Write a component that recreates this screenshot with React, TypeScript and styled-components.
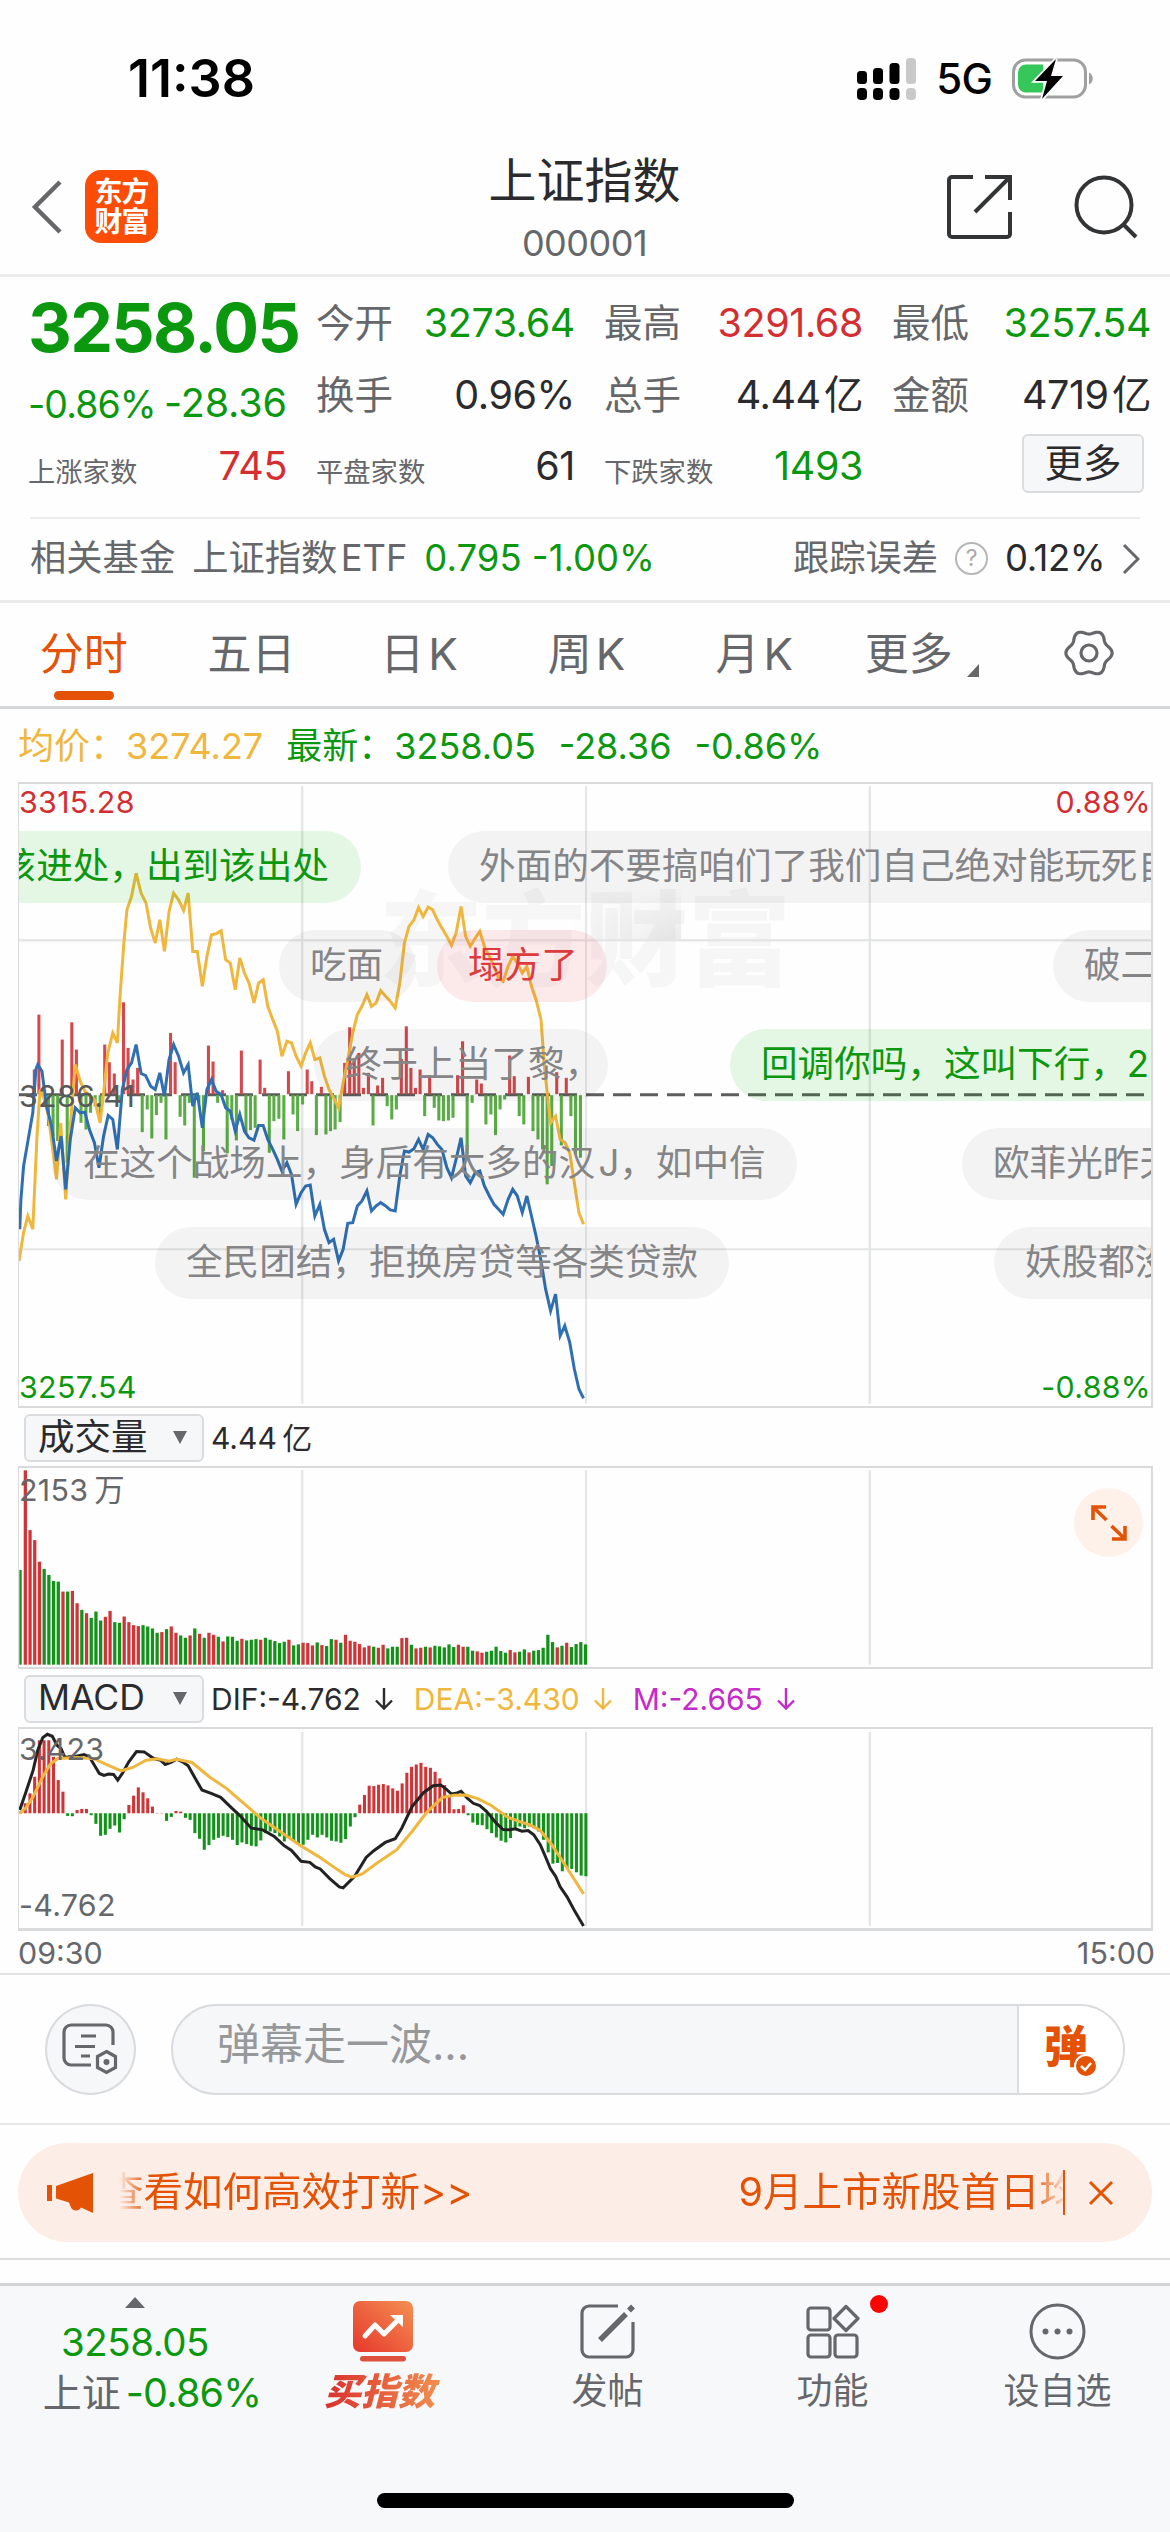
import React from "react";
import styled, { createGlobalStyle, css } from "styled-components";

const C = {
  green: "#0b980f",
  red: "#d32f33",
  ink: "#2b2b2d",
  grey: "#66676a",
  light: "#97989a",
  orange: "#e35205",
  yellow: "#efb73e",
  line: "#d9dadb",
  blue: "#2f6fb2",
  panel: "#f6f7f9",
};

const Global = createGlobalStyle`
  * { box-sizing: border-box; }
  html, body { margin: 0; padding: 0; background: #fefefe; }
  body {
    font-family: Inter, "Noto Sans CJK SC", sans-serif;
    color: ${C.ink};
    overflow: hidden;
  }
  svg { display: block; flex: none; }
`;

const Screen = styled.main`
  width: 1170px;
  height: 2532px;
  display: flex;
  flex-direction: column;
  overflow: hidden;
  background: #fefefe;
`;

const Txt = styled.span<{ $s: number; $c?: string; $ls?: number; $w?: number; $m?: string }>`
  font-size: ${(p) => p.$s}px;
  line-height: 1.2;
  color: ${(p) => p.$c || C.ink};
  letter-spacing: ${(p) => p.$ls || 0}px;
  font-weight: ${(p) => p.$w || 400};
  margin: ${(p) => p.$m || 0};
  white-space: nowrap;
  flex: none;
`;

/* ---------- status bar ---------- */
const StatusBar = styled.div`
  height: 156px;
  padding: 2px 76px 0 128px;
  display: flex;
  align-items: center;
  justify-content: space-between;
`;
const StatusIcons = styled.div`
  display: flex;
  align-items: center;
  gap: 20px;
`;

/* ---------- header ---------- */
const Header = styled.header`
  height: 121px;
  border-bottom: 3px solid #ececed;
  display: grid;
  grid-template-columns: 1fr auto 1fr;
  padding: 0 32px 0 31px;
`;
const HeaderSide = styled.div<{ $end?: boolean }>`
  display: flex;
  align-items: center;
  padding-bottom: 18px;
  padding-top: 1px;
  gap: ${(p) => (p.$end ? 62 : 22)}px;
  justify-content: ${(p) => (p.$end ? "flex-end" : "flex-start")};
`;
const TitleBlock = styled.div`
  display: flex;
  flex-direction: column;
  align-items: center;
  gap: 12px;
  margin-top: -4px;
`;
const BrandLogo = styled.div`
  width: 73px;
  height: 73px;
  border-radius: 16px;
  background: #fb4d07;
  color: #fff;
  font-weight: 700;
  font-size: 28px;
  line-height: 30px;
  letter-spacing: -1px;
  display: flex;
  flex-direction: column;
  align-items: center;
  justify-content: center;
`;

/* ---------- quote ---------- */
const Quote = styled.section`
  height: 240px;
  margin: 0 19px 0 28px;
  padding-top: 10px;
  display: grid;
  grid-template-columns: 259px 259px 259px 259px;
  column-gap: 29px;
`;
const Column = styled.div`
  display: flex;
  flex-direction: column;
`;
const Row = styled.div<{ $h: number; $pt?: number }>`
  height: ${(p) => p.$h}px;
  padding-top: ${(p) => p.$pt || 0}px;
  display: flex;
  align-items: center;
  justify-content: space-between;
`;
const MoreButton = styled.button`
  width: 122px;
  height: 59px;
  margin: 0 7px 0 auto;
  padding: 0;
  border: 2px solid #dadcdf;
  border-radius: 6px;
  background: #f6f7f9;
  font-family: inherit;
  display: grid;
  place-items: center;
`;
const FundRow = styled.section`
  height: 86px;
  border-bottom: 3px solid #ececed;
  padding: 0 30px;
  display: flex;
  align-items: center;
  gap: 17px;
  box-shadow: inset 30px 0 #fefefe, inset -30px 0 #fefefe, inset 0 2px #ececed;
`;
const Spacer = styled.div`
  flex: 1;
`;
const Help = styled.span`
  width: 33px;
  height: 33px;
  border: 2px solid #b5b6b8;
  border-radius: 50%;
  color: #aaa;
  font-size: 23px;
  line-height: 29px;
  text-align: center;
`;

/* ---------- tabs ---------- */
const Tabs = styled.nav`
  height: 106px;
  border-bottom: 3px solid #d6d7d8;
  display: grid;
  grid-template-columns: repeat(7, 167.6px);
`;
const Tab = styled.div<{ $on?: boolean }>`
  height: 104px;
  padding-top: 25px;
  display: flex;
  align-items: flex-start;
  justify-content: center;
  position: relative;
  font-size: 44px;
  line-height: 53px;
  white-space: nowrap;
  color: ${(p) => (p.$on ? C.orange : C.grey)};
  ${(p) =>
    p.$on &&
    css`
      &::after {
        content: "";
        position: absolute;
        left: 54px;
        bottom: 7px;
        width: 60px;
        height: 9px;
        border-radius: 5px;
        background: ${C.orange};
      }
    `}
`;
const Corner = styled.i`
  align-self: flex-start;
  margin: 36px 0 0 14px;
  border-left: 12px solid transparent;
  border-bottom: 13px solid ${C.grey};
`;
const Legend = styled.div`
  height: 73px;
  padding: 2px 0 0 18px;
  display: flex;
  align-items: center;
  gap: 23px;
`;

/* ---------- plots ---------- */
const Plot = styled.div<{ $h: number; $b?: number }>`
  position: relative;
  overflow: hidden;
  height: ${(p) => p.$h}px;
  margin: 0 17px 0 18px;
  border: 2px solid ${C.line};
  border-bottom-width: ${(p) => p.$b || 2}px;
  border-left-width: 1px;
  flex: none;
`;
const Canvas = styled.svg`
  position: relative;
  width: 1134px;
  height: 100%;
`;
const Overlay = styled.span<{ $x?: number; $r?: number; $y: number; $c: string }>`
  position: absolute;
  top: ${(p) => p.$y}px;
  ${(p) => (p.$r !== undefined ? `right: ${p.$r}px` : `left: ${p.$x || 0}px`)};
  color: ${(p) => p.$c};
  font-size: 30.4px;
  line-height: 36px;
  letter-spacing: 0.3px;
  white-space: nowrap;
`;
const Watermark = styled.div`
  position: absolute;
  left: 360px;
  top: 92px;
  font-size: 103px;
  line-height: 130px;
  font-weight: 900;
  color: #f6f6f7;
  white-space: nowrap;
`;
const Smudge = styled.div`
  position: absolute;
  left: 552px;
  top: 104px;
  width: 110px;
  height: 52px;
  background: linear-gradient(90deg, rgba(0, 0, 0, 0), rgba(0, 0, 0, 0.08));
  mask-image: linear-gradient(transparent, #000);
`;
const tones = {
  grey: ["rgba(0,0,0,.045)", "#858587"],
  green: ["rgba(0,180,0,.1)", "#0c970f"],
  red: ["rgba(235,30,45,.09)", "#dd3a3e"],
};
const Bullet = styled.div<{ $x: number; $y: number; $w?: number; $tone: keyof typeof tones }>`
  position: absolute;
  left: ${(p) => p.$x}px;
  top: ${(p) => p.$y}px;
  width: ${(p) => (p.$w ? p.$w + "px" : "auto")};
  height: 72px;
  padding: 0 31px;
  border-radius: 36px;
  background: ${(p) => tones[p.$tone][0]};
  color: ${(p) => tones[p.$tone][1]};
  font-size: 36.6px;
  line-height: 71px;
  white-space: nowrap;
`;
const PlotBar = styled.div<{ $h: number }>`
  height: ${(p) => p.$h}px;
  padding: 1px 0 0 24px;
  display: flex;
  align-items: center;
`;
const Picker = styled.div`
  width: 180px;
  height: 48px;
  margin-right: 7px;
  padding: 0 15px 0 12px;
  border: 2px solid #dadcdf;
  border-radius: 6px;
  background: #f6f7f9;
  display: flex;
  align-items: center;
  justify-content: space-between;
`;
const Down = styled.i`
  border: 7px solid transparent;
  border-top: 13px solid ${C.grey};
  border-bottom: 0;
`;
const Up = styled(Down)`
  border: 10px solid transparent;
  border-bottom: 11px solid ${C.grey};
  border-top: 0;
`;
const ArrowBox = styled.span`
  margin: 0 20px 0 13px;
`;
const Expand = styled.div`
  position: absolute;
  right: 8px;
  top: 20px;
  width: 69px;
  height: 69px;
  border-radius: 50%;
  background: #fef1e9;
  display: grid;
  place-items: center;
`;
const TimeAxis = styled.div`
  height: 44px;
  padding: 2px 15px 0 18px;
  border-bottom: 2px solid #e2e3e4;
  display: flex;
  align-items: center;
  justify-content: space-between;
`;

/* ---------- comment box, notice, tab bar ---------- */
const CommentRow = styled.section`
  height: 150px;
  padding: 0 45px;
  border-bottom: 2px solid #e7e8e9;
  display: flex;
  align-items: center;
  gap: 35px;
`;
const RoundButton = styled.div`
  width: 91px;
  height: 91px;
  border: 2px solid #d9dbde;
  border-radius: 50%;
  background: ${C.panel};
  display: grid;
  place-items: center;
`;
const CommentBox = styled.div`
  width: 955px;
  height: 91px;
  border: 2px solid #d9dbde;
  border-radius: 46px;
  overflow: hidden;
  display: flex;
  background: ${C.panel};
`;
const CommentInput = styled.div`
  flex: 1;
  padding: 13px 0 0 44px;
`;
const CommentToggle = styled.div`
  width: 106px;
  border-left: 2px solid #d9dbde;
  background: #fff;
  position: relative;
  padding: 15px 0 0 25px;
`;
const ToggleCheck = styled.svg`
  position: absolute;
  left: 55px;
  top: 48px;
`;
const Notice = styled.section`
  height: 99px;
  margin: 18px 18px 16px;
  padding: 0 36px 0 29px;
  border-radius: 50px;
  background: #fceee6;
  display: flex;
  align-items: center;
`;
const Ticker = styled.div`
  width: 944px;
  flex: none;
  margin-left: 24px;
  overflow: hidden;
  display: flex;
  justify-content: space-between;
  mask-image: linear-gradient(90deg, transparent, #000 28px, #000 912px, rgba(0, 0, 0, 0.15));
`;
const NoticeRule = styled.i`
  width: 2px;
  flex: none;
  height: 45px;
  background: ${C.orange};
  margin-right: 23px;
`;
const Foot = styled.div`
  height: 25px;
  border-top: 2px solid #dcdddf;
`;
const TabBar = styled.footer`
  flex: 1;
  background: #f7f8fa;
  border-top: 3px solid #d3d4d6;
  display: grid;
  grid-template-columns: 270px 225px 225px 225px 225px;
  grid-template-rows: 206px 1fr;
`;
const TabItem = styled.div<{ $pt: number }>`
  padding-top: ${(p) => p.$pt}px;
  display: flex;
  flex-direction: column;
  align-items: center;
  position: relative;
`;
const IndexLine = styled.div`
  display: flex;
  align-items: center;
  gap: 5px;
  margin: 5px 0 0 34px;
`;
const BuyLabel = styled.span`
  margin-top: 6px;
  font-size: 37px;
  line-height: 48px;
  font-weight: 900;
  font-style: italic;
  background: linear-gradient(90deg, #d9302c, #f2904f);
  -webkit-background-clip: text;
  background-clip: text;
  color: transparent;
  padding-right: 6px;
`;
const Dot = styled.i`
  position: absolute;
  left: 150px;
  top: 9px;
  width: 18px;
  height: 18px;
  border-radius: 50%;
  background: #f80505;
`;
const HomeIndicator = styled.div`
  grid-column: 1 / -1;
  justify-self: center;
  width: 417px;
  height: 15px;
  margin-top: 1px;
  border-radius: 8px;
  background: #000;
`;

/* ---------- chart data ---------- */
const avgLine =
  "48,1475 60,1390 71,1340 84,1380 95,1100 103,960 113,985 125,1040 146,1230 157,1060 170,1290 180,1100 195,885 208,935 220,965 245,990 260,1060 270,960 280,850 293,790 305,820 312,680 322,520 330,420 342,380 354,310 367,370 380,400 392,475 404,520 416,450 428,545 440,425 452,370 465,390 478,422 490,370 502,545 514,545 527,650 539,560 551,495 563,492 576,483 588,570 600,580 613,660 625,565 637,610 649,640 662,700 674,640 686,630 698,710 711,750 723,785 735,860 748,815 760,820 772,860 785,890 797,850 809,820 821,870 834,865 846,920 858,960 870,985 883,1015 895,940 907,870 920,790 932,735 944,710 957,675 969,710 981,700 993,663 1006,680 1018,695 1031,715 1043,640 1055,520 1067,470 1080,450 1092,413 1104,440 1117,412 1129,420 1141,450 1153,475 1166,500 1178,527 1190,490 1203,410 1215,500 1227,530 1240,505 1252,485 1264,530 1277,560 1289,590 1301,625 1313,635 1326,590 1338,560 1350,580 1363,610 1375,590 1387,650 1399,690 1412,750 1420,880 1430,990 1437,1060 1450,1040 1462,1110 1475,1120 1487,1150 1499,1240 1511,1330 1523,1365";
const priceLine =
  "50,1380 53,1290 60,1190 72,1110 84,1030 92,900 97,885 108,905 120,1010 133,1070 146,1175 158,1100 170,1260 182,1110 195,1015 208,1030 220,1028 232,1080 245,1120 257,1195 269,1100 281,1038 293,1050 305,1140 318,960 330,900 342,880 354,825 367,912 379,918 392,950 404,960 416,910 428,980 440,870 452,825 465,860 478,910 490,885 502,1010 514,970 527,1075 539,960 551,930 563,965 576,975 588,1015 600,1025 613,1085 625,1035 637,1085 649,1105 662,1112 674,1068 686,1068 698,1110 711,1140 723,1170 735,1205 748,1180 760,1215 772,1305 785,1270 797,1250 809,1247 821,1340 834,1305 846,1380 858,1420 870,1410 883,1475 895,1440 907,1362 920,1360 932,1310 944,1295 957,1265 969,1325 981,1310 993,1300 1006,1310 1018,1322 1031,1325 1043,1220 1055,1145 1067,1148 1080,1138 1092,1110 1104,1140 1117,1095 1129,1105 1141,1125 1153,1140 1166,1195 1178,1225 1190,1170 1203,1105 1215,1220 1227,1240 1240,1210 1252,1205 1264,1250 1277,1280 1289,1305 1301,1320 1313,1335 1326,1290 1338,1260 1350,1280 1363,1330 1375,1280 1387,1340 1399,1400 1412,1475 1424,1560 1437,1625 1450,1575 1462,1700 1474,1670 1487,1720 1499,1800 1511,1860 1523,1888";
const gains: number[][] = [
  [88, 900], [100, 735], [161, 810], [186, 758], [198, 840], [272, 825], [284, 878], [297, 912], [321, 698], [333, 835], [346, 930], [358, 895], [444, 790], [456, 878], [543, 828], [555, 876], [580, 962], [629, 843], [678, 870], [690, 955], [752, 905], [801, 900], [813, 935], [838, 952], [899, 880], [912, 773], [924, 870], [936, 850], [948, 955], [961, 910], [985, 948], [998, 925], [1047, 868], [1060, 770], [1072, 895], [1084, 955], [1096, 900], [1121, 917], [1194, 917], [1207, 815], [1244, 930], [1256, 942], [1330, 858], [1342, 920], [1379, 922], [1453, 908], [1478, 925],
];
const losses: number[][] = [
  [125, 1070], [137, 1100], [149, 1115], [174, 1180], [210, 1060], [223, 1080], [235, 1030], [247, 1010], [260, 1050], [309, 1000], [370, 1088], [383, 1020], [395, 1107], [407, 1037], [419, 1000], [432, 1110], [469, 1042], [481, 1068], [493, 1000], [506, 1225], [518, 1000], [530, 1145], [567, 1000], [592, 1152], [604, 1050], [616, 1113], [641, 1090], [653, 1082], [665, 1075], [702, 1150], [714, 1055], [727, 1048], [740, 1110], [764, 1035], [776, 1085], [789, 1005], [825, 1097], [850, 1095], [862, 1085], [874, 1080], [887, 1058], [973, 1068], [1010, 1010], [1022, 1050], [1034, 1020], [1108, 1040], [1133, 1015], [1145, 1053], [1157, 1055], [1170, 1053], [1182, 1045], [1219, 1155], [1232, 1000], [1268, 1065], [1281, 1035], [1293, 1097], [1305, 1020], [1317, 990], [1355, 1040], [1367, 1065], [1391, 1085], [1404, 1110], [1416, 1140], [1428, 1245], [1440, 1190], [1465, 1128], [1490, 1040], [1502, 1155], [1515, 1165],
];
const volume =
  "g513 r213 r393 r423 r488 g510 g528 g546 g548 r578 g578 r576 r613 g633 r643 g657 g638 g665 r654 r636 g670 g672 r653 r670 r679 r682 g679 g683 g689 g702 r700 g691 r683 r702 g710 g717 r710 g689 r705 g717 r702 r708 g714 r728 g713 g714 g726 r720 g725 g723 g721 r723 g717 g723 g727 g733 g729 r723 g740 g737 r732 r733 r740 g731 r739 g742 g721 r723 g732 r708 r726 r729 r736 r746 r741 g744 r747 r738 g749 g744 g744 r718 r717 g738 r749 r747 g744 r746 g741 g743 g746 g737 g745 r738 r744 g744 g756 r758 r762 g759 g756 g744 g757 g762 r754 r761 g759 g752 r761 g756 g754 g747 g708 g730 r746 g741 r732 g745 g736 g730 g737".split(
    " "
  );
const macd = [
  455, 430, 400, 350, 240, 240, 240, 290, 360, 395, 468, 469, 450, 447, 447, 466, 492, 528, 525, 507, 497, 518, 478, 435, 407, 382, 397, 415, 440, 459, 459, 483, 471, 453, 455, 474, 480, 520, 537, 570, 556, 540, 534, 528, 532, 540, 556, 548, 553, 558, 560, 542, 520, 515, 520, 530, 545, 535, 545, 553, 555, 540, 525, 533, 525, 533, 543, 545, 549, 538, 500, 472, 434, 405, 377, 378, 374, 372, 376, 385, 392, 370, 338, 320, 313, 308, 320, 323, 335, 355, 375, 405, 448, 447, 436, 466, 488, 495, 496, 508, 520, 533, 543, 548, 535, 505, 500, 505, 500, 505, 515, 540, 578, 612, 610, 635, 625, 628, 638, 648, 650,
];
const difLine =
  "50,450 65,400 85,330 97,270 110,232 122,222 135,228 147,255 158,265 168,292 180,290 195,289 218,283 232,290 245,315 258,340 270,346 282,342 295,343 306,360 318,340 335,305 355,274 375,275 400,295 418,300 430,313 445,307 460,297 475,305 490,317 505,348 526,390 550,400 575,412 600,440 625,467 655,505 685,510 715,530 740,557 760,572 785,605 808,608 822,622 835,628 860,657 885,682 895,685 925,650 955,593 975,573 1005,548 1031,537 1048,505 1075,440 1105,398 1130,377 1150,375 1165,388 1178,402 1190,400 1203,394 1220,415 1235,430 1252,437 1270,455 1295,490 1313,509 1330,510 1345,507 1362,514 1378,512 1393,525 1410,555 1425,595 1437,628 1450,650 1462,682 1480,712 1500,755 1523,800";
const deaLine =
  "50,460 65,445 85,410 110,350 130,312 150,295 200,292 245,296 280,315 315,332 345,322 380,300 410,296 440,303 460,297 500,307 545,350 590,385 630,425 680,475 730,515 780,555 830,590 880,630 900,645 918,653 945,643 980,613 1035,570 1075,515 1115,455 1155,412 1185,406 1215,405 1245,415 1280,435 1325,472 1360,487 1385,496 1410,512 1440,555 1480,625 1523,703";

const Grid = ({ top, bottom }: { top: number; bottom: number }) => (
  <g fill="#e4e5e6">
    <rect x="785" y={top} width="6" height={bottom - top} />
    <rect x="1527" y={top} width="5" height={bottom - top} />
    <rect x="2268" y={top} width="6" height={bottom - top} />
  </g>
);
const Curve = ({ points, color }: { points: string; color: string }) => (
  <polyline points={points} fill="none" stroke={color} strokeWidth="3" vectorEffect="non-scaling-stroke" strokeLinejoin="miter" />
);

const bullets: { x: number; y: number; w?: number; tone: keyof typeof tones; t: string }[] = [
  { x: -87, y: 47, tone: "green", w: 429, t: "到该进处，出到该出处" },
  { x: 429, y: 47, tone: "grey", t: "外面的不要搞咱们了我们自己绝对能玩死自己" },
  { x: 260, y: 146, tone: "grey", w: 137, t: "吃面" },
  { x: 418, y: 146, tone: "red", w: 170, t: "塌方了" },
  { x: 1034, y: 146, tone: "grey", t: "破二千" },
  { x: 295, y: 245, tone: "grey", w: 294, t: "终于上当了黎，" },
  { x: 711, y: 245, tone: "green", t: "回调你吗，这叫下行，2500" },
  { x: 33, y: 344, tone: "grey", w: 745, t: "在这个战场上，身后有太多的汉\u200aJ，如中信" },
  { x: 943, y: 344, tone: "grey", t: "欧菲光昨天" },
  { x: 136, y: 443, tone: "grey", w: 574, t: "全民团结，拒换房贷等各类贷款" },
  { x: 975, y: 443, tone: "grey", t: "妖股都没了" },
];

const Arrow = ({ color }: { color: string }) => (
  <ArrowBox>
    <svg width="20" height="24" viewBox="0 0 20 24" fill="none" stroke={color} strokeWidth="2.4">
      <path d="M10 1v20M2 13.5l8 8 8-8" />
    </svg>
  </ArrowBox>
);

const gearPath = (() => {
  const pts: string[] = [];
  for (let i = 0; i < 120; i++) {
    const a = (i / 120) * Math.PI * 2;
    const r = 21 + 2.1 * Math.cos(6 * a);
    pts.push(`${(25 + r * Math.cos(a)).toFixed(2)},${(25 + r * Math.sin(a)).toFixed(2)}`);
  }
  return pts.join(" ");
})();

const Pair = ({ l, v, c, h, small }: { l: string; v: string; c?: string; h: number; small?: boolean }) => (
  <Row $h={h}>
    <Txt $s={small ? 27.3 : 38.5} $c={C.grey} $m={small ? "13px 0 0" : "0"}>
      {l}
    </Txt>
    <Txt $s={39.5} $c={c} $ls={-0.4}>
      {v}
    </Txt>
  </Row>
);

export default function App() {
  return (
    <Screen>
      <Global />
      <StatusBar>
        <Txt $s={52} $c="#000" $w={600}>
          11:38
        </Txt>
        <StatusIcons>
          <svg width="59" height="42" viewBox="0 0 59 42">
            {[0, 16, 32.5, 49].map((x, i) => (
              <g key={x} fill={i === 3 ? "#c9c9ca" : "#000"}>
                <rect x={x} y={[13, 10, 5, 0][i]} width="10" height={[13, 16, 21, 26][i]} rx="3.5" />
                <rect x={x} y="30" width="10" height="12" rx="4" />
              </g>
            ))}
          </svg>
          <Txt $s={42} $c="#000" $w={500} $ls={-0.8}>
            5G
          </Txt>
          <svg width="82" height="44" viewBox="0 0 82 44">
            <rect x="1.5" y="3" width="72" height="37" rx="12" fill="#fefefe" stroke="#a0a0a2" strokeWidth="3" />
            <path d="M14 7.5h17v28H14a8 8 0 0 1-8-8v-12a8 8 0 0 1 8-8z" fill="#35c759" />
            <path d="M77 15.5c5 2 5 10 0 12z" fill="#a0a0a2" />
            <path d="M44 2L23 24h12l-5 18 21-23H39z" fill="#000" stroke="#fefefe" strokeWidth="3.5" paintOrder="stroke" />
          </svg>
        </StatusIcons>
      </StatusBar>

      <Header>
        <HeaderSide>
          <svg width="32" height="54" viewBox="0 0 32 54" fill="none" stroke="#666769" strokeWidth="4.5">
            <path d="M29 2L4 27l25 25" />
          </svg>
          <BrandLogo>
            <span>东方</span>
            <span>财富</span>
          </BrandLogo>
        </HeaderSide>
        <TitleBlock>
          <Txt $s={48}>上证指数</Txt>
          <Txt $s={36} $c={C.grey} $ls={-0.5}>
            000001
          </Txt>
        </TitleBlock>
        <HeaderSide $end>
          <svg width="66" height="66" viewBox="0 0 66 66" fill="none" stroke="#333436" strokeWidth="4">
            <path d="M27 3H6a3 3 0 0 0-3 3v54a3 3 0 0 0 3 3h55a3 3 0 0 0 3-3V38M39 3h25v23M64 3L29 38" />
          </svg>
          <svg width="64" height="66" viewBox="0 0 64 66" fill="none" stroke="#333436" strokeWidth="4">
            <circle cx="30" cy="31" r="27.5" />
            <path d="M49 50l13 13" />
          </svg>
        </HeaderSide>
      </Header>

      <Quote>
        <Column>
          <Row $h={80} $pt={2}>
            <Txt $s={68} $c={C.green} $w={700} $ls={-1.7}>
              3258.05
            </Txt>
          </Row>
          <Row $h={74}>
            <Txt $s={37.5} $c={C.green} $ls={-0.9}>
              -0.86%
            </Txt>
            <Txt $s={39.5} $c={C.green} $ls={-0.1}>
              -28.36
            </Txt>
          </Row>
          <Pair l="上涨家数" v="745" c={C.red} h={52} small />
        </Column>
        <Column>
          <Pair l="今开" v="3273.64" c={C.green} h={73} />
          <Pair l="换手" v="0.96%" h={71} />
          <Pair l="平盘家数" v="61" h={72} small />
        </Column>
        <Column>
          <Pair l="最高" v="3291.68" c={C.red} h={73} />
          <Pair l="总手" v={"4.44\u200a亿"} h={71} />
          <Pair l="下跌家数" v="1493" c={C.green} h={72} small />
        </Column>
        <Column>
          <Pair l="最低" v="3257.54" c={C.green} h={73} />
          <Pair l="金额" v={"4719\u200a亿"} h={71} />
          <Row $h={65}>
            <MoreButton>
              <Txt $s={38.5}>更多</Txt>
            </MoreButton>
          </Row>
        </Column>
      </Quote>

      <FundRow>
        <Txt $s={36.3} $c={C.grey}>
          相关基金
        </Txt>
        <Txt $s={36.3} $c={C.grey}>
          {"上证指数\u200aETF"}
        </Txt>
        <Txt $s={36.5} $c={C.green}>
          0.795 -1.00%
        </Txt>
        <Spacer />
        <Txt $s={36.3} $c={C.grey}>
          跟踪误差
        </Txt>
        <Help>?</Help>
        <Txt $s={36.5} $ls={-0.5}>
          0.12%
        </Txt>
        <svg width="18" height="32" viewBox="0 0 18 32" fill="none" stroke={C.grey} strokeWidth="3">
          <path d="M2 2l14 14L2 30" />
        </svg>
      </FundRow>

      <Tabs>
        <Tab $on>分时</Tab>
        <Tab>五日</Tab>
        <Tab>{"日\u200aK"}</Tab>
        <Tab>{"周\u200aK"}</Tab>
        <Tab>{"月\u200aK"}</Tab>
        <Tab>
          更多
          <Corner />
        </Tab>
        <Tab>
          <svg width="50" height="50" viewBox="0 0 50 50" fill="none" stroke={C.grey} strokeWidth="3.2">
            <polygon points={gearPath} />
            <circle cx="25" cy="25" r="8" />
          </svg>
        </Tab>
      </Tabs>

      <Legend>
        <Txt $s={36} $c={C.yellow}>
          均价：3274.27
        </Txt>
        <Txt $s={36} $c={C.green}>
          最新：3258.05
        </Txt>
        <Txt $s={36} $c={C.green}>
          -28.36
        </Txt>
        <Txt $s={36} $c={C.green}>
          -0.86%
        </Txt>
      </Legend>

      <Plot $h={626}>
        <Watermark>东方财富</Watermark>
        <Smudge />
        <Canvas viewBox="48 42 2963 1869" preserveAspectRatio="none">
          <Grid top={48} bottom={1904} />
          <rect x="48" y="508" width="2963" height="7" fill="#e4e5e6" />
          <rect x="48" y="1437" width="2963" height="6" fill="#e4e5e6" />
          <line x1="48" x2="3011" y1="976" y2="976" stroke="#5c5d5c" strokeWidth="3" strokeDasharray="18 9" vectorEffect="non-scaling-stroke" />
          {gains.map(([x, y]) => (
            <rect key={x} x={x - 4} y={y} width="8" height={974 - y} fill="#d5484c" />
          ))}
          {losses.map(([x, y]) => (
            <rect key={x} x={x - 4} y="977" width="8" height={y - 977} fill="#5aac45" />
          ))}
          <Curve points={avgLine} color={C.yellow} />
          <Curve points={priceLine} color={C.blue} />
        </Canvas>
        {bullets.map((b) => (
          <Bullet key={b.t} $x={b.x} $y={b.y} $w={b.w} $tone={b.tone}>
            {b.t}
          </Bullet>
        ))}
        <Overlay $y={0} $c={C.red}>3315.28</Overlay>
        <Overlay $y={0} $r={0} $c={C.red}>0.88%</Overlay>
        <Overlay $y={294} $c="#58595a">3286.41</Overlay>
        <Overlay $y={585} $c={C.green}>3257.54</Overlay>
        <Overlay $y={585} $r={0} $c={C.green}>-0.88%</Overlay>
      </Plot>

      <PlotBar $h={58}>
        <Picker>
          <Txt $s={36.5}>成交量</Txt>
          <Down />
        </Picker>
        <Txt $s={30}>{"4.44\u2009亿"}</Txt>
      </PlotBar>

      <Plot $h={203}>
        <Canvas viewBox="48 206 2963 599" preserveAspectRatio="none">
          <Grid top={212} bottom={798} />
          {volume.map((v, i) => {
            const top = Number(v.slice(1));
            return <rect key={i} x={i ? 48 + 12.3 * i : 49} y={top} width={i ? 8.5 : 6} height={798 - top} fill={v[0] === "r" ? "#cf3437" : "#13921a"} />;
          })}
        </Canvas>
        <Overlay $y={4} $c={C.grey}>{"2153\u2009万"}</Overlay>
        <Expand>
          <svg width="36" height="36" viewBox="0 0 36 36" fill="none" stroke={C.orange} strokeWidth="3.6">
            <path d="M2 15V2h13M2.5 2.500l13 12.500M34 21v13H21M33.500 33.500l-13-12.500" />
          </svg>
        </Expand>
      </Plot>

      <PlotBar $h={58}>
        <Picker>
          <Txt $s={35.5}>MACD</Txt>
          <Down />
        </Picker>
        <Txt $s={30}>DIF:-4.762</Txt>
        <Arrow color={C.ink} />
        <Txt $s={30} $c={C.yellow}>DEA:-3.430</Txt>
        <Arrow color={C.yellow} />
        <Txt $s={30} $c="#c52bc9">M:-2.665</Txt>
        <Arrow color="#c52bc9" />
      </PlotBar>

      <Plot $h={204} $b={3}>
        <Canvas viewBox="48 206 2963 600" preserveAspectRatio="none">
          <Grid top={215} bottom={800} />
          {macd.map((y, i) => (
            <rect key={i} x={48 + 12.31 * i} y={Math.min(y, 460)} width="8" height={Math.abs(460 - y)} fill={y < 460 ? "#cf3437" : "#13921a"} />
          ))}
          <Curve points={difLine} color="#222" />
          <Curve points={deaLine} color={C.yellow} />
        </Canvas>
        <Overlay $y={2} $c={C.grey}>3.423</Overlay>
        <Overlay $y={158} $c={C.grey}>-4.762</Overlay>
      </Plot>
      <TimeAxis>
        <Txt $s={30.4} $c={C.grey}>09:30</Txt>
        <Txt $s={30.4} $c={C.grey}>15:00</Txt>
      </TimeAxis>

      <CommentRow>
        <RoundButton>
          <svg width="56" height="52" viewBox="0 0 56 52" fill="none" stroke={C.grey} strokeWidth="3.2">
            <path d="M51 22V9a7 7 0 0 0-7-7H9a7 7 0 0 0-7 7v26a7 7 0 0 0 7 7h20" />
            <path d="M19 13h15M13 23.5h20M19 33h9" />
            <path d="M44.5 28.500l9 5v11l-9 5-9-5v-11z" />
            <circle cx="44.5" cy="39" r="3" fill={C.grey} stroke="none" />
          </svg>
        </RoundButton>
        <CommentBox>
          <CommentInput>
            <Txt $s={43} $c={C.light}>弹幕走一波...</Txt>
          </CommentInput>
          <CommentToggle>
            <Txt $s={44} $c={C.orange} $w={900}>弹</Txt>
            <ToggleCheck width="24" height="24" viewBox="0 0 24 24">
              <circle cx="12" cy="12" r="11" fill={C.orange} stroke="#fff" strokeWidth="2" />
              <path d="M7 12l4 4 6-7" fill="none" stroke="#fff" strokeWidth="2.5" />
            </ToggleCheck>
          </CommentToggle>
        </CommentBox>
      </CommentRow>

      <Notice>
        <svg width="48" height="40" viewBox="0 0 48 40" fill={C.orange}>
          <path d="M0 12h5v16H0zM9 13L46 0v40L34 34.500c-2 4-8 4-10 0l-2-5-13-4z" />
        </svg>
        <Ticker>
          <Txt $s={39.5} $c={C.orange} $m="0 0 0 -15px">查看如何高效打新&gt;&gt;</Txt>
          <Txt $s={39.5} $c={C.orange} $m="0 -16px 0 0">9月上市新股首日均</Txt>
        </Ticker>
        <NoticeRule />
        <svg width="26" height="26" viewBox="0 0 26 26" fill="none" stroke={C.orange} strokeWidth="3">
          <path d="M2 2l22 22M24 2L2 24" />
        </svg>
      </Notice>
      <Foot />

      <TabBar>
        <TabItem $pt={11}>
          <Up />
          <Txt $s={38.5} $c={C.green} $ls={-0.5} $m="11px 0 0">
            3258.05
          </Txt>
          <IndexLine>
            <Txt $s={39} $c={C.grey}>上证</Txt>
            <Txt $s={39.5} $c={C.green} $ls={-0.8}>-0.86%</Txt>
          </IndexLine>
        </TabItem>
        <TabItem $pt={15}>
          <svg width="60" height="61" viewBox="0 0 60 61">
            <defs>
              <linearGradient id="buy" x1="0" y1="1" x2="1" y2="0">
                <stop offset="0" stopColor="#e6372c" />
                <stop offset="1" stopColor="#f58f52" />
              </linearGradient>
            </defs>
            <rect width="60" height="51" rx="7" fill="url(#buy)" />
            <rect x="7" y="55" width="46" height="5.5" rx="2.7" fill="#e0503e" />
            <path d="M12 35l10-11 9 9L45 19" fill="none" stroke="#fff" strokeWidth="5" strokeLinecap="round" strokeLinejoin="round" />
            <path d="M37 14h13v12z" fill="#fff" />
          </svg>
          <BuyLabel>买指数</BuyLabel>
        </TabItem>
        <TabItem $pt={18}>
          <svg width="56" height="56" viewBox="0 0 56 56" fill="none" stroke={C.grey} strokeWidth="3.2">
            <path d="M38 2H9a7 7 0 0 0-7 7v37a7 7 0 0 0 7 7h37a7 7 0 0 0 7-7V18" />
            <path d="M20 36L46 10M49 6.500l4-4" strokeWidth="5.5" />
          </svg>
          <Txt $s={36} $c={C.grey} $m="10px 0 0">发帖</Txt>
        </TabItem>
        <TabItem $pt={18}>
          <svg width="54" height="56" viewBox="0 0 54 56" fill="none" stroke={C.grey} strokeWidth="3.2">
            <rect x="2" y="4" width="22" height="22" rx="3" />
            <rect x="2" y="31" width="22" height="22" rx="3" />
            <rect x="29" y="31" width="22" height="22" rx="3" />
            <path d="M40 2.500L52 14.500 40 26.500 28 14.500z" strokeLinejoin="round" />
          </svg>
          <Dot />
          <Txt $s={36} $c={C.grey} $m="10px 0 0">功能</Txt>
        </TabItem>
        <TabItem $pt={17}>
          <svg width="57" height="57" viewBox="0 0 57 57" fill="none" stroke={C.grey} strokeWidth="3">
            <circle cx="28.5" cy="28.5" r="26.5" />
            <g fill={C.grey} stroke="none">
              <circle cx="16.5" cy="28.5" r="3" />
              <circle cx="28.5" cy="28.5" r="3" />
              <circle cx="40.5" cy="28.5" r="3" />
            </g>
          </svg>
          <Txt $s={36} $c={C.grey} $m="10px 0 0">设自选</Txt>
        </TabItem>
        <HomeIndicator />
      </TabBar>
    </Screen>
  );
}
